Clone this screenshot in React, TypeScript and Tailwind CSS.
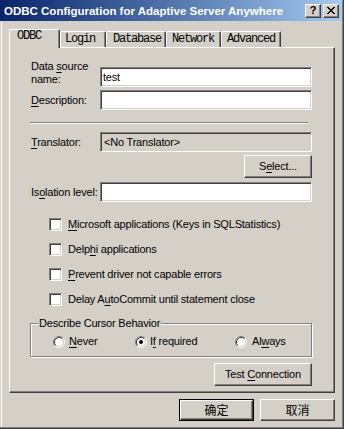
import React from "react";

const FONT = "font-['Liberation_Sans',Arial,sans-serif]";
const sunken =
  "border border-t-[#808080] border-l-[#808080] border-b-white border-r-white shadow-[inset_1px_1px_0_#404040,inset_-1px_-1px_0_#d4d0c8]";
const raised =
  "border border-t-white border-l-white border-b-[#404040] border-r-[#404040] shadow-[inset_-1px_-1px_0_#808080,inset_1px_1px_0_#d4d0c8]";

function U({ children }: { children: React.ReactNode }) {
  return <span className="underline decoration-1 underline-offset-[2px]">{children}</span>;
}

const X_PATTERN = [
  "##....##",
  ".##..##.",
  "..####..",
  "...##...",
  "..####..",
  ".##..##.",
  "##....##",
];

function CloseGlyph() {
  const rects: React.ReactNode[] = [];
  X_PATTERN.forEach((row, y) =>
    row.split("").forEach((c, x) => {
      if (c === "#") rects.push(<rect key={`${x}-${y}`} x={x} y={y} width={1} height={1} fill="#000" />);
    })
  );
  return (
    <svg width="8" height="7" viewBox="0 0 8 7" shapeRendering="crispEdges">
      {rects}
    </svg>
  );
}

function Checkbox({ children }: { children: React.ReactNode }) {
  return (
    <div className="flex items-center h-[13px]">
      <div className={`ml-[18px] w-[13px] h-[13px] bg-white ${sunken}`} />
      <span className="ml-[6px] text-[11px] leading-[13px] tracking-[-0.2px] whitespace-nowrap">{children}</span>
    </div>
  );
}

function Radio({ checked }: { checked?: boolean }) {
  return (
    <svg width="12" height="12" viewBox="0 0 12 12" className="shrink-0">
      <circle cx="6" cy="6" r="4.5" fill="#fff" />
      <path d="M2.11 9.89 A5.5 5.5 0 0 1 9.89 2.11" fill="none" stroke="#808080" strokeWidth="1" />
      <path d="M9.89 2.11 A5.5 5.5 0 0 1 2.11 9.89" fill="none" stroke="#ffffff" strokeWidth="1" />
      <path d="M2.82 9.18 A4.5 4.5 0 0 1 9.18 2.82" fill="none" stroke="#404040" strokeWidth="1" />
      <path d="M9.18 2.82 A4.5 4.5 0 0 1 2.82 9.18" fill="none" stroke="#d4d0c8" strokeWidth="1" />
      {checked && <circle cx="6" cy="6" r="2" fill="#000" />}
    </svg>
  );
}

const tabs = [
  { label: "ODBC", cls: "w-[51px] pl-[7px]", sel: true },
  { label: "Login", cls: "w-[46px] pl-[4px]" },
  { label: "Database", cls: "w-[60px] pl-[6px]" },
  { label: "Network", cls: "w-[55px] pl-[5px]" },
  { label: "Advanced", cls: "w-[60px] pl-[5px]" },
];

export default function App() {
  return (
    <div
      className={`w-[344px] h-[429px] bg-[#d4d0c8] border-r border-b border-[#404040] flex flex-col ${FONT} text-black select-none overflow-hidden`}
    >
      <div className="flex-1 flex flex-col border-r border-b border-[#808080] min-h-0">
        {/* Title bar */}
        <div className="h-[21px] shrink-0 flex items-center bg-linear-to-r from-[#0a246a] to-[#a6caf0] pl-[4px] pr-[3px]">
          <span className="flex-1 text-white font-bold text-[11.5px] leading-[14px] whitespace-nowrap">
            ODBC Configuration for Adaptive Server Anywhere
          </span>
          <div className={`w-[16px] h-[14px] bg-[#d4d0c8] ${raised} flex items-center justify-center`}>
            <span className="font-bold text-[11px] leading-none">?</span>
          </div>
          <div className={`ml-[2px] w-[16px] h-[14px] bg-[#d4d0c8] ${raised} flex items-center justify-center`}>
            <CloseGlyph />
          </div>
        </div>

        {/* Body */}
        <div className="flex-1 ml-px border-l border-white flex flex-col min-h-0">
          {/* Tabs */}
          <div className="relative z-10 ml-[7px] mt-[8px] h-[18px] flex items-end font-['Liberation_Mono',monospace] text-[12px] tracking-[-1.2px]">
            {tabs.map((t) =>
              t.sel ? (
                <div
                  key={t.label}
                  className={`${t.cls} h-[19px] -mb-px bg-[#d4d0c8] border-t border-l border-white border-r border-r-[#404040] rounded-t-[2px] shadow-[inset_-1px_0_0_#808080] leading-[13px] whitespace-nowrap`}
                >
                  {t.label}
                </div>
              ) : (
                <div
                  key={t.label}
                  className={`${t.cls} h-[16px] bg-[#d4d0c8] border-t border-l border-white border-r border-r-[#404040] rounded-t-[2px] shadow-[inset_-1px_0_0_#808080] leading-[15px] whitespace-nowrap`}
                >
                  {t.label}
                </div>
              )
            )}
          </div>

          {/* Panel */}
          <div className="ml-[7px] w-[326px] h-[346px] shrink-0 border border-white border-r-[#404040] border-b-[#404040] shadow-[inset_-1px_-1px_0_#808080] pt-[12px] pl-[21px] pr-[22px] flex flex-col text-[11px] tracking-[-0.2px]">
            {/* Data source name */}
            <div className="flex items-start h-[27px]">
              <div className="w-[69px] leading-[13px]">
                Data <U>s</U>ource
                <br />
                name:
              </div>
              <div className={`flex-1 mt-[7px] h-[20px] bg-white ${sunken} pl-[2px] leading-[18px]`}>test</div>
            </div>
            {/* Description */}
            <div className="flex items-center h-[20px] mt-[3px]">
              <div className="w-[69px] leading-[13px]">
                <U>D</U>escription:
              </div>
              <div className={`flex-1 h-[20px] bg-white ${sunken}`} />
            </div>
            {/* Separator */}
            <div className="mt-[12px] -ml-px mr-[4px] h-[2px] border-t border-[#808080] border-b border-b-white" />
            {/* Translator */}
            <div className="flex items-center h-[20px] mt-[8px]">
              <div className="w-[69px] leading-[13px]">
                <U>T</U>ranslator:
              </div>
              <div className={`flex-1 h-[20px] bg-[#d4d0c8] ${sunken} pl-[3px] leading-[18px]`}>&lt;No Translator&gt;</div>
            </div>
            {/* Select */}
            <div className="flex justify-end mt-[3px]">
              <div className={`w-[68px] h-[23px] ${raised} flex items-center justify-center`}>
                <span className="leading-[13px]">
                  S<U>e</U>lect...
                </span>
              </div>
            </div>
            {/* Isolation */}
            <div className="flex items-center h-[20px] mt-[4px]">
              <div className="w-[69px] leading-[13px] whitespace-nowrap">
                Is<U>o</U>lation level:
              </div>
              <div className={`flex-1 h-[20px] bg-white ${sunken}`} />
            </div>
            {/* Checkboxes */}
            <div className="mt-[16px] flex flex-col gap-[12px]">
              <Checkbox>
                <U>M</U>icrosoft applications (Keys in SQLStatistics)
              </Checkbox>
              <Checkbox>
                Delp<U>h</U>i applications
              </Checkbox>
              <Checkbox>
                <U>P</U>revent driver not capable errors
              </Checkbox>
              <Checkbox>
                Delay A<U>u</U>toCommit until statement close
              </Checkbox>
            </div>
            {/* Group box */}
            <div className="relative mt-[17px] -ml-px h-[34px] border border-[#808080] shadow-[1px_1px_0_#fff,inset_1px_1px_0_#fff] pt-[3px] flex items-center">
              <span className="absolute left-[7px] -top-[7px] px-px bg-[#d4d0c8] leading-[13px] whitespace-nowrap">
                Describe Cursor Behavior
              </span>
              <div className="ml-[22px] w-[82px] flex items-center gap-[4px]">
                <Radio />
                <span className="leading-[13px]">
                  <U>N</U>ever
                </span>
              </div>
              <div className="w-[100px] flex items-center gap-[3px]">
                <Radio checked />
                <span className="leading-[13px]">
                  I<U>f</U> required
                </span>
              </div>
              <div className="flex items-center gap-[5px]">
                <Radio />
                <span className="leading-[13px]">
                  Al<U>w</U>ays
                </span>
              </div>
            </div>
            {/* Test Connection */}
            <div className="flex justify-end mt-[6px]">
              <div className={`w-[98px] h-[23px] ${raised} flex items-center justify-center whitespace-nowrap`}>
                <span className="leading-[13px]">
                  Test <U>C</U>onnection
                </span>
              </div>
            </div>
          </div>

          {/* Bottom buttons */}
          <div className="flex justify-end mt-[6px] pr-[7px] gap-[6px] font-['Noto_Sans_CJK_SC','Liberation_Sans',sans-serif] text-[12px]">
            <div className="w-[75px] h-[22px] border border-black">
              <div className={`w-full h-full ${raised} flex items-center justify-center leading-[14px]`}>确定</div>
            </div>
            <div className={`w-[75px] h-[22px] ${raised} flex items-center justify-center leading-[14px]`}>取消</div>
          </div>
        </div>
      </div>
    </div>
  );
}
